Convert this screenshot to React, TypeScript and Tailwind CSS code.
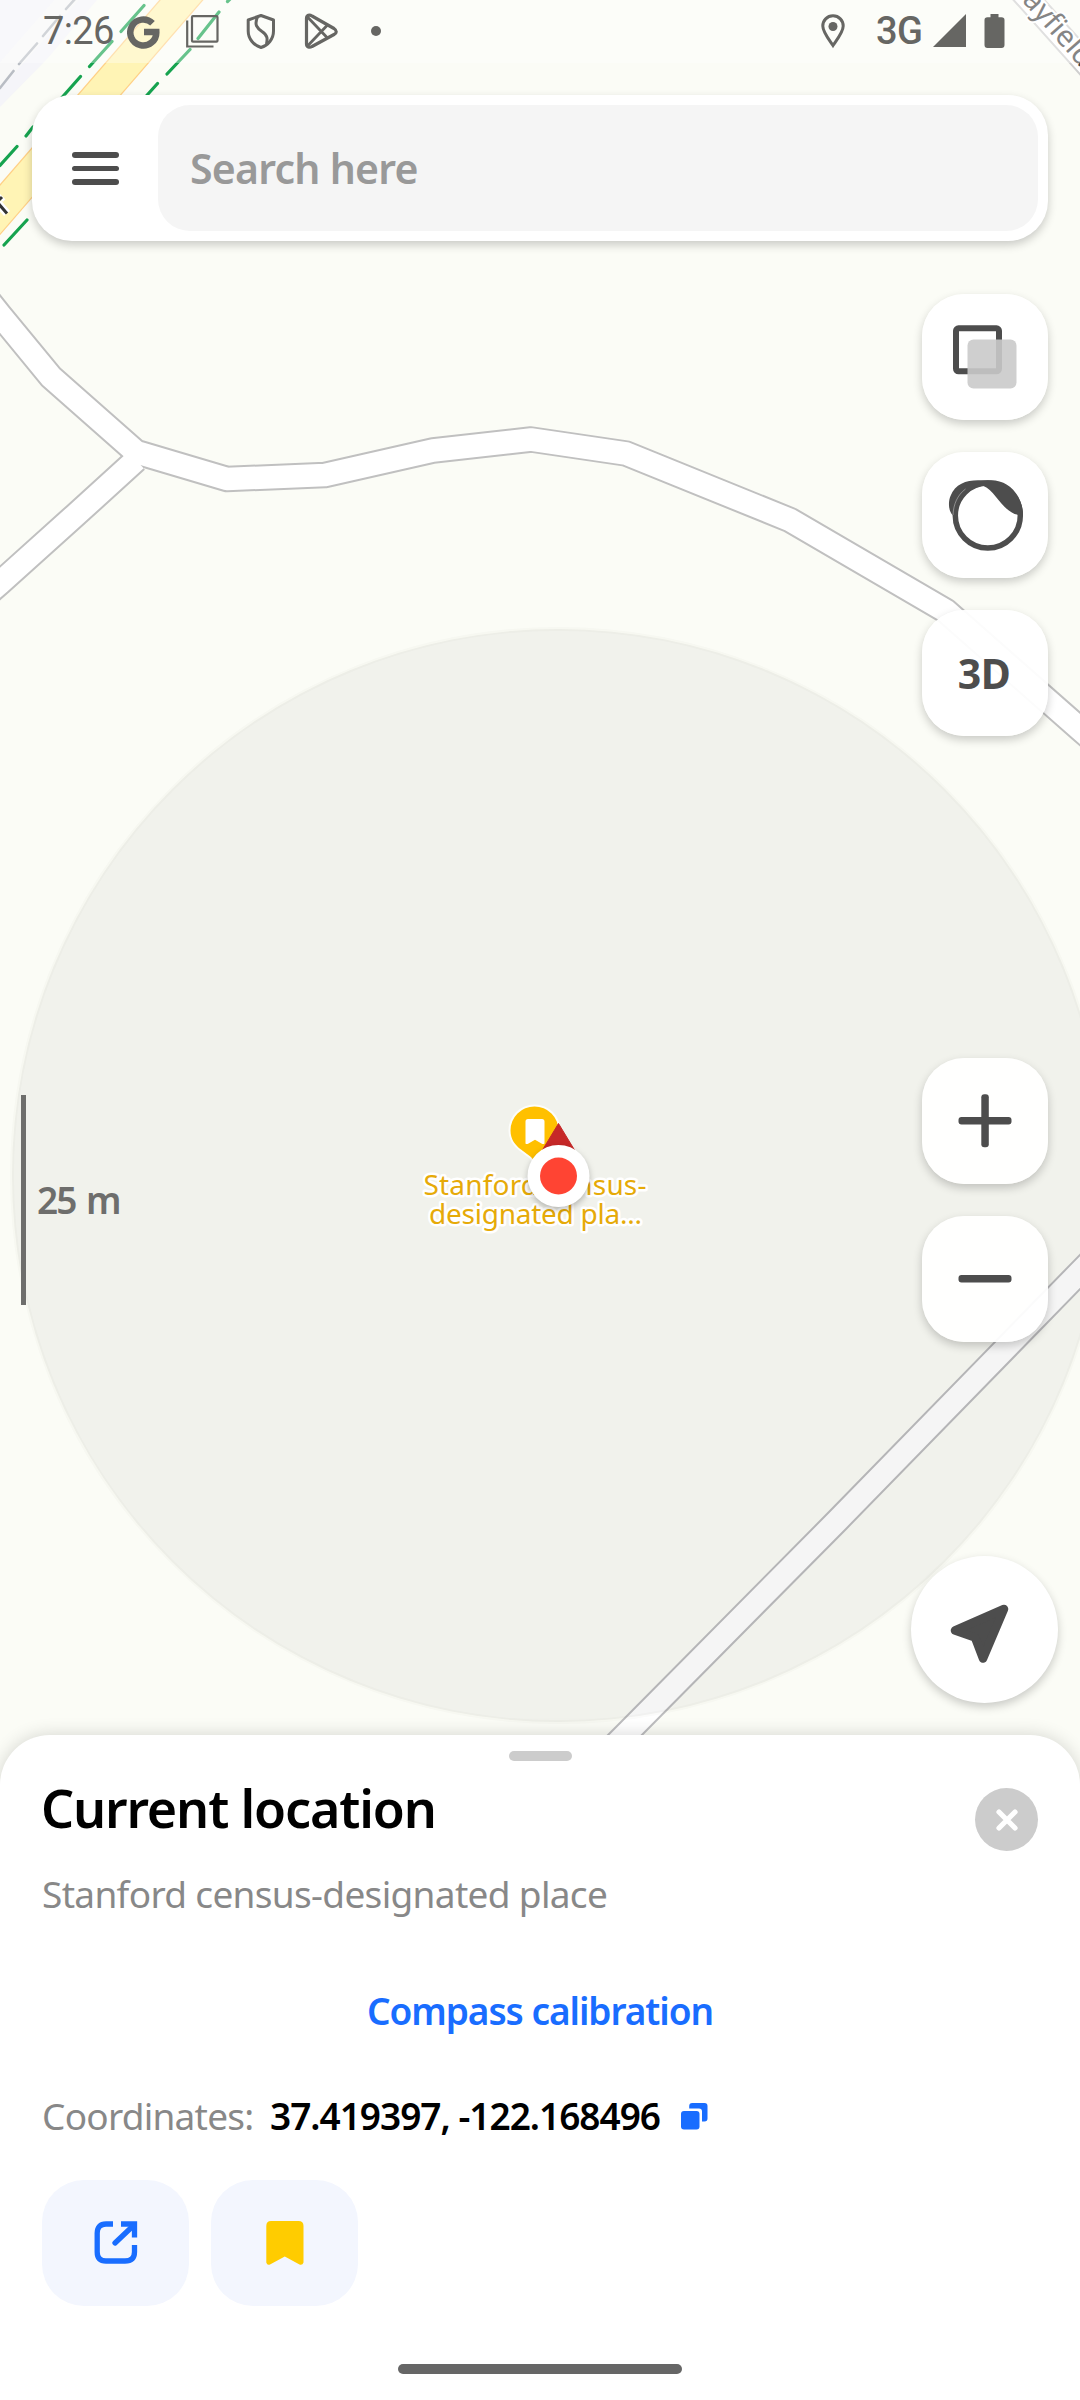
import React from "react";

const INK = "#4d4d4d";
const STATUS = "#666663";

function MapCanvas() {
  const road =
    "M-40 265 L0 315 L51 377 L136 452 L227 479 L325 475 L433 450.5 L531 439.5 L626 453.5 L790 520 L946 611 L1080 729 L1120 764";
  const branch = "M-20 600 L0 583 L75 515.5 L136 460";
  const lane = "M590 1770 L625 1735 L838 1520 L1080 1272 L1120 1231";
  const mayfield = "M993 -40 L1029 0 L1080 57 L1116 97";
  return (
    <svg className="absolute inset-0" width="1080" height="2400" viewBox="0 0 1080 2400">
      <rect width="1080" height="2400" fill="#fbfcf6" />
      <path d="M0 0H97L48 58L0 107Z" fill="#f5f5f9" />
      <path d="M84 -20L-20 99" stroke="#f8f8f8" strokeWidth="18" fill="none" />
      <g stroke="#b9bdc4" strokeWidth="2.6" strokeLinecap="round">
        <path d="M75 -1L66 9M60 16L43 36M37 43.5L19 64M13.500 71L0 88" />
      </g>
      <path d="M216 -40L-34 249" stroke="#ffd086" strokeWidth="33.500" />
      <path d="M216 -40L-34 249" stroke="#fff4b5" strokeWidth="31" />
      <g stroke="#16a34f" strokeWidth="3.200" strokeLinecap="round">
        <path d="M144 5.500L121 31.500M112 41.500L89.500 66.500M80.500 76.500L58 102M33 127L26 136M17 146.500L0 165.500" />
        <path d="M230 -1L227.500 1.500M219 12L198 38.500M190 49.500L167 74M157.500 83.500L140 103M27 220L4 245" />
      </g>
      <g fill="none" strokeLinejoin="round">
        <path d={mayfield} stroke="#cfcfcf" strokeWidth="25" />
        <path d={mayfield} stroke="#ffffff" strokeWidth="21" />
        <path d={road} stroke="#c0c0c0" strokeWidth="26.500" />
        <path d={branch} stroke="#c0c0c0" strokeWidth="26.500" />
        <path d={lane} stroke="#bdbdbf" strokeWidth="26" />
        <path d={road} stroke="#ffffff" strokeWidth="22.500" />
        <path d={branch} stroke="#ffffff" strokeWidth="22.500" />
        <path d={lane} stroke="#ffffff" strokeWidth="22" />
      </g>
      <text
        transform="translate(1004 -19) rotate(48.500)"
        fontSize="29"
        fill="#444"
        stroke="#fff"
        strokeWidth="4"
        paintOrder="stroke"
      >
        Mayfield
      </text>
      <path d="M0 199L2.500 196.500M-2 203L7 213.500" stroke="#fff" strokeWidth="8" />
      <path d="M-2 201L2 197M-2 203L7 213.500" stroke="#333" strokeWidth="3" />

      <circle cx="558.500" cy="1175.500" r="546.500" fill="#1e1e14" fillOpacity="0.045" stroke="#1e1e14" strokeOpacity="0.02" strokeWidth="4" />

      <path
        d="M534.500 1106.500a24 24 0 0 1 24 24c0 9-5 15-10.500 19l-10 7.500q-3.500 3.500-3.500 7q0-3.500-3.500-7l-10-7.500c-5.500-4-10.500-10-10.500-19a24 24 0 0 1 24-24Z"
        fill="#ffc000"
        stroke="#fff"
        strokeOpacity="0.8"
        strokeWidth="4"
        paintOrder="stroke"
      />
      <path d="M528 1119h14q2.500 0 2.500 2.500v22q-1 1-3 0l-6.500-3.700l-6.500 3.700q-2 1-3 0v-22q0-2.500 2.500-2.500Z" fill="#fff" />
      <g fontSize="28" fill="#e6aa08" stroke="#fff" strokeWidth="5" strokeLinejoin="round" paintOrder="stroke">
        <text x="423.500" y="1194.500" textLength="223">
          Stanford census-
        </text>
        <text x="429" y="1223.500" textLength="213">
          designated pla...
        </text>
      </g>
      <path d="M558.500 1123.500L574.500 1150H542.500Z" fill="#c62828" stroke="#c62828" strokeWidth="1" strokeLinejoin="round" />
      <circle cx="558.500" cy="1176" r="31" fill="#fff" className="drop-shadow-[0_3px_3px_rgba(0,0,0,0.25)]" />
      <circle cx="558.500" cy="1176" r="18.500" fill="#ff4433" />
    </svg>
  );
}

function StatusBar() {
  return (
    <header className="flex h-[63px] items-start bg-white/35 font-[Roboto] text-[38px] leading-[62px] text-[#666663]">
      <span className="ml-[43px] w-[84px] tracking-[-0.6px]">7:26</span>
      <svg className="mt-[15px]" width="33" height="34" viewBox="0 0 33 34" fill="none" stroke={STATUS} strokeWidth="6.500">
        <path d="M25.500 8.300A13 13 0 1 0 29.300 17H17" />
      </svg>
      <svg className="mt-[15px] ml-[26px]" width="33" height="34" viewBox="0 0 33 34" fill="none" stroke={STATUS}>
        <rect x="6" y="1.200" width="25.500" height="25.500" rx="1" strokeWidth="2.200" />
        <path d="M1.200 5.500V31.500H27.500" strokeWidth="2.200" />
      </svg>
      <svg className="mt-[13px] ml-[26px]" width="32" height="37" viewBox="0 0 32 37" fill="none" stroke={STATUS} strokeWidth="3" strokeLinejoin="round">
        <path d="M16 2.500L28.500 7V18C28.500 26 23 32.500 16 34.500C9 32.500 3.200 26 3.200 18V7Z" />
        <path d="M12.500 4C9 12 12 15 17 18.500C23 22.500 22.500 26 21.500 31" />
      </svg>
      <svg className="mt-[12px] ml-[26px]" width="36" height="38" viewBox="0 0 36 38" fill="none" stroke={STATUS} strokeWidth="3.200" strokeLinejoin="round">
        <path d="M3.500 6.500C3.500 3 6.500 2.500 9 4L31 16.500C34 18.500 34 21 31 22.500L9 34.500C6.500 36 3.500 35 3.500 32Z" />
        <path d="M4.500 5L24.500 26M4.500 34L24.500 13" strokeWidth="2.800" />
      </svg>
      <span className="mt-[26px] ml-[32px] h-[10px] w-[10px] rounded-full bg-[#666663]" />
      <svg className="mt-[14px] ml-auto" width="24" height="35" viewBox="0 0 24 35" fill="none" stroke={STATUS} strokeWidth="3">
        <path d="M12 1.800C6 1.800 1.800 6.500 1.800 12C1.800 18 8 25.500 12 31.500C16 25.500 22.200 18 22.200 12C22.200 6.500 18 1.800 12 1.800Z" />
        <circle cx="12" cy="12.500" r="4.500" fill={STATUS} stroke="none" />
      </svg>
      <span className="ml-[31px] w-[57px] font-medium tracking-[-0.500px]">3G</span>
      <svg className="mt-[14px]" width="33" height="34" viewBox="0 0 33 34">
        <path d="M33 0V33H0Z" fill={STATUS} />
      </svg>
      <svg className="mt-[14px] mr-[75px] ml-[18px]" width="21" height="34" viewBox="0 0 21 34">
        <path d="M6.500 0H14.500V3.300H17.500Q20.500 3.300 20.500 6V31Q20.500 34 17.500 34H3.500Q0.500 34 0.500 31V6Q0.500 3.300 3.500 3.300H6.500Z" fill={STATUS} />
      </svg>
    </header>
  );
}

function SearchBar() {
  return (
    <div className="mx-8 mt-8 flex h-[146px] shrink-0 rounded-[40px] bg-white p-[10px] shadow-[0_4px_10px_rgba(0,0,0,0.2)]">
      <button className="flex w-[116px] flex-col items-start gap-2 pt-[47px] pl-[30px]" aria-label="Menu">
        <span className="h-[5.500px] w-[47px] rounded-full bg-[#4d4d4d]" />
        <span className="h-[5.500px] w-[47px] rounded-full bg-[#4d4d4d]" />
        <span className="h-[5.500px] w-[47px] rounded-full bg-[#4d4d4d]" />
      </button>
      <div className="flex flex-1 items-center rounded-[32px] bg-[#f5f5f5] pl-[32px] text-[41px] leading-[60px] font-semibold tracking-[-0.750px] text-[#999]">
        Search here
      </div>
    </div>
  );
}

function MapButton({ className = "", label, children }: { className?: string; label: string; children: React.ReactNode }) {
  return (
    <button
      aria-label={label}
      className={`mr-[10px] flex h-[126px] w-[126px] shrink-0 items-center justify-center rounded-[42px] bg-white/94 shadow-[0_4px_10px_rgba(0,0,0,0.2)] ${className}`}
    >
      {children}
    </button>
  );
}

function MapControls() {
  return (
    <div className="flex min-h-0 flex-1 justify-between">
      <div className="mt-[854px] ml-[21px] flex h-[210px] items-center">
        <span className="h-full w-[5px] bg-[#6e6e6c]" />
        <span className="ml-[11px] text-[37px] leading-[50px] font-semibold tracking-[-2px] [word-spacing:3px] text-[#6e6e6c]">25 m</span>
      </div>
      <div className="mr-[22px] flex flex-col items-end pt-[53px]">
        <MapButton label="Layers">
          <svg width="64" height="64" viewBox="0 0 64 64" fill="none">
            <rect x="3" y="3.300" width="43" height="43" rx="2.500" stroke={INK} strokeWidth="6" />
            <rect x="14.500" y="14.500" width="49" height="49" rx="6" fill="#cacaca" fillOpacity="0.9" />
          </svg>
        </MapButton>
        <MapButton label="Panoramas" className="mt-8">
          <svg className="ml-[2px]" width="76" height="72" viewBox="0 0 76 72">
            <circle cx="39.800" cy="36.500" r="32.500" fill="none" stroke={INK} strokeWidth="5.500" />
            <path
              d="M30 1.200H43C62 1.200 75 18 75 36L71 36C55 34 48 12 35.500 7C21 8 9.500 20 9 36L4.500 36C0 31 0.300 22 2.500 17C7 5 18 1.200 30 1.200Z"
              fill={INK}
            />
            <path d="M5 36C5.500 25 9.500 16 17.500 10" stroke="#bbb" strokeWidth="0.600" fill="none" />
          </svg>
        </MapButton>
        <MapButton label="3D" className="mt-8 pt-[2px] pr-[2px] text-[41px] font-bold tracking-[-0.500px] text-[#4d4d4d]">
          3D
        </MapButton>
        <MapButton label="Zoom in" className="mt-[322px]">
          <svg width="54" height="54" viewBox="0 0 54 54" fill={INK}>
            <rect x="0.500" y="23" width="53" height="7.500" rx="3" />
            <rect x="23.300" y="0.300" width="7.500" height="53" rx="3" />
          </svg>
        </MapButton>
        <MapButton label="Zoom out" className="mt-8">
          <svg width="54" height="54" viewBox="0 0 54 54" fill={INK}>
            <rect x="0.500" y="23" width="53" height="7.500" rx="3" />
          </svg>
        </MapButton>
        <button
          aria-label="Locate"
          className="mt-[214px] flex h-[147px] w-[147px] shrink-0 items-center justify-center rounded-full bg-white shadow-[0_4px_10px_rgba(0,0,0,0.2)]"
        >
          <svg className="mt-[8px] mr-[10px]" width="60" height="60" viewBox="0 0 60 60">
            <path d="M54 5L5 26.500L25 33.500L33 54.500Z" fill={INK} stroke={INK} strokeWidth="8.500" strokeLinejoin="round" />
          </svg>
        </button>
      </div>
    </div>
  );
}

function Sheet() {
  return (
    <section className="flex h-[665px] shrink-0 flex-col rounded-t-[50px] bg-white px-[42px] pt-4 shadow-[0_0_18px_rgba(0,0,0,0.16)]">
      <span className="h-[10px] w-[63px] shrink-0 self-center rounded-full bg-[#ccc]" />
      <div className="mt-[16px] flex justify-between">
        <div>
          <h1 className="ml-[-1px] text-[52px] leading-[61px] font-semibold tracking-[-1.150px] text-black">Current location</h1>
          <p className="mt-[31px] text-[37px] leading-[50px] tracking-[-0.670px] text-[#888]">Stanford census-designated place</p>
        </div>
        <button aria-label="Close" className="mt-[11px] flex h-[63px] w-[63px] items-center justify-center rounded-full bg-[#ccc]">
          <svg width="22" height="22" viewBox="0 0 22 22" stroke="#fff" strokeWidth="5.200" strokeLinecap="round">
            <path d="M3 3L19 19M19 3L3 19" />
          </svg>
        </button>
      </div>
      <button className="mt-[67px] self-center text-[37px] leading-[50px] font-semibold tracking-[-1.050px] text-[#196dff]">Compass calibration</button>
      <div className="mt-[55px] flex items-center text-[37px] leading-[50px]">
        <span className="w-[228px] tracking-[-0.750px] text-[#888]">Coordinates:</span>
        <span className="w-[411px] font-semibold tracking-[-1px] text-black">37.419397, -122.168496</span>
        <svg width="27" height="27" viewBox="0 0 27 27" fill="#196dff">
          <rect x="0" y="8" width="18.500" height="18.500" rx="3" />
          <path d="M8.200 5.500V3Q8.200 0 11.200 0H23.500Q26.500 0 26.500 3V15.500Q26.500 18.500 23.500 18.500H21V8.500Q21 5.500 18 5.500Z" />
        </svg>
      </div>
      <div className="mt-[39px] flex gap-[22px]">
        <button aria-label="Share" className="flex h-[126px] w-[147px] items-center justify-center rounded-[42px] bg-[#f3f6fe]">
          <svg width="44" height="44" viewBox="0 0 44 44" fill="none" stroke="#196dff" strokeWidth="5.300">
            <path d="M19 3H12Q3.200 3 3.200 12V31Q3.200 40 12 40H31Q40.500 40 40.500 31V24" />
            <path d="M27 3H40.500V16.500" />
            <path d="M40 4L21 22" strokeLinecap="round" />
          </svg>
        </button>
        <button aria-label="Bookmark" className="flex h-[126px] w-[147px] items-center justify-center rounded-[42px] bg-[#f3f6fe]">
          <svg width="38" height="44" viewBox="0 0 38 44">
            <path d="M5 0H32.500Q37.500 0 37.500 5V41.500Q36.500 44.500 33.500 43.500L18.800 35.500L4 43.500Q1 44.500 0.300 41.500V5Q0.300 0 5 0Z" fill="#ffcc00" />
          </svg>
        </button>
      </div>
      <span className="mt-[58px] h-[10px] w-[284px] shrink-0 self-center rounded-full bg-[#666]" />
    </section>
  );
}

export default function App() {
  return (
    <main className="relative h-[2400px] w-[1080px] overflow-hidden font-['Noto_Sans',sans-serif]">
      <MapCanvas />
      <div className="relative flex h-full flex-col">
        <StatusBar />
        <SearchBar />
        <MapControls />
        <Sheet />
      </div>
    </main>
  );
}
